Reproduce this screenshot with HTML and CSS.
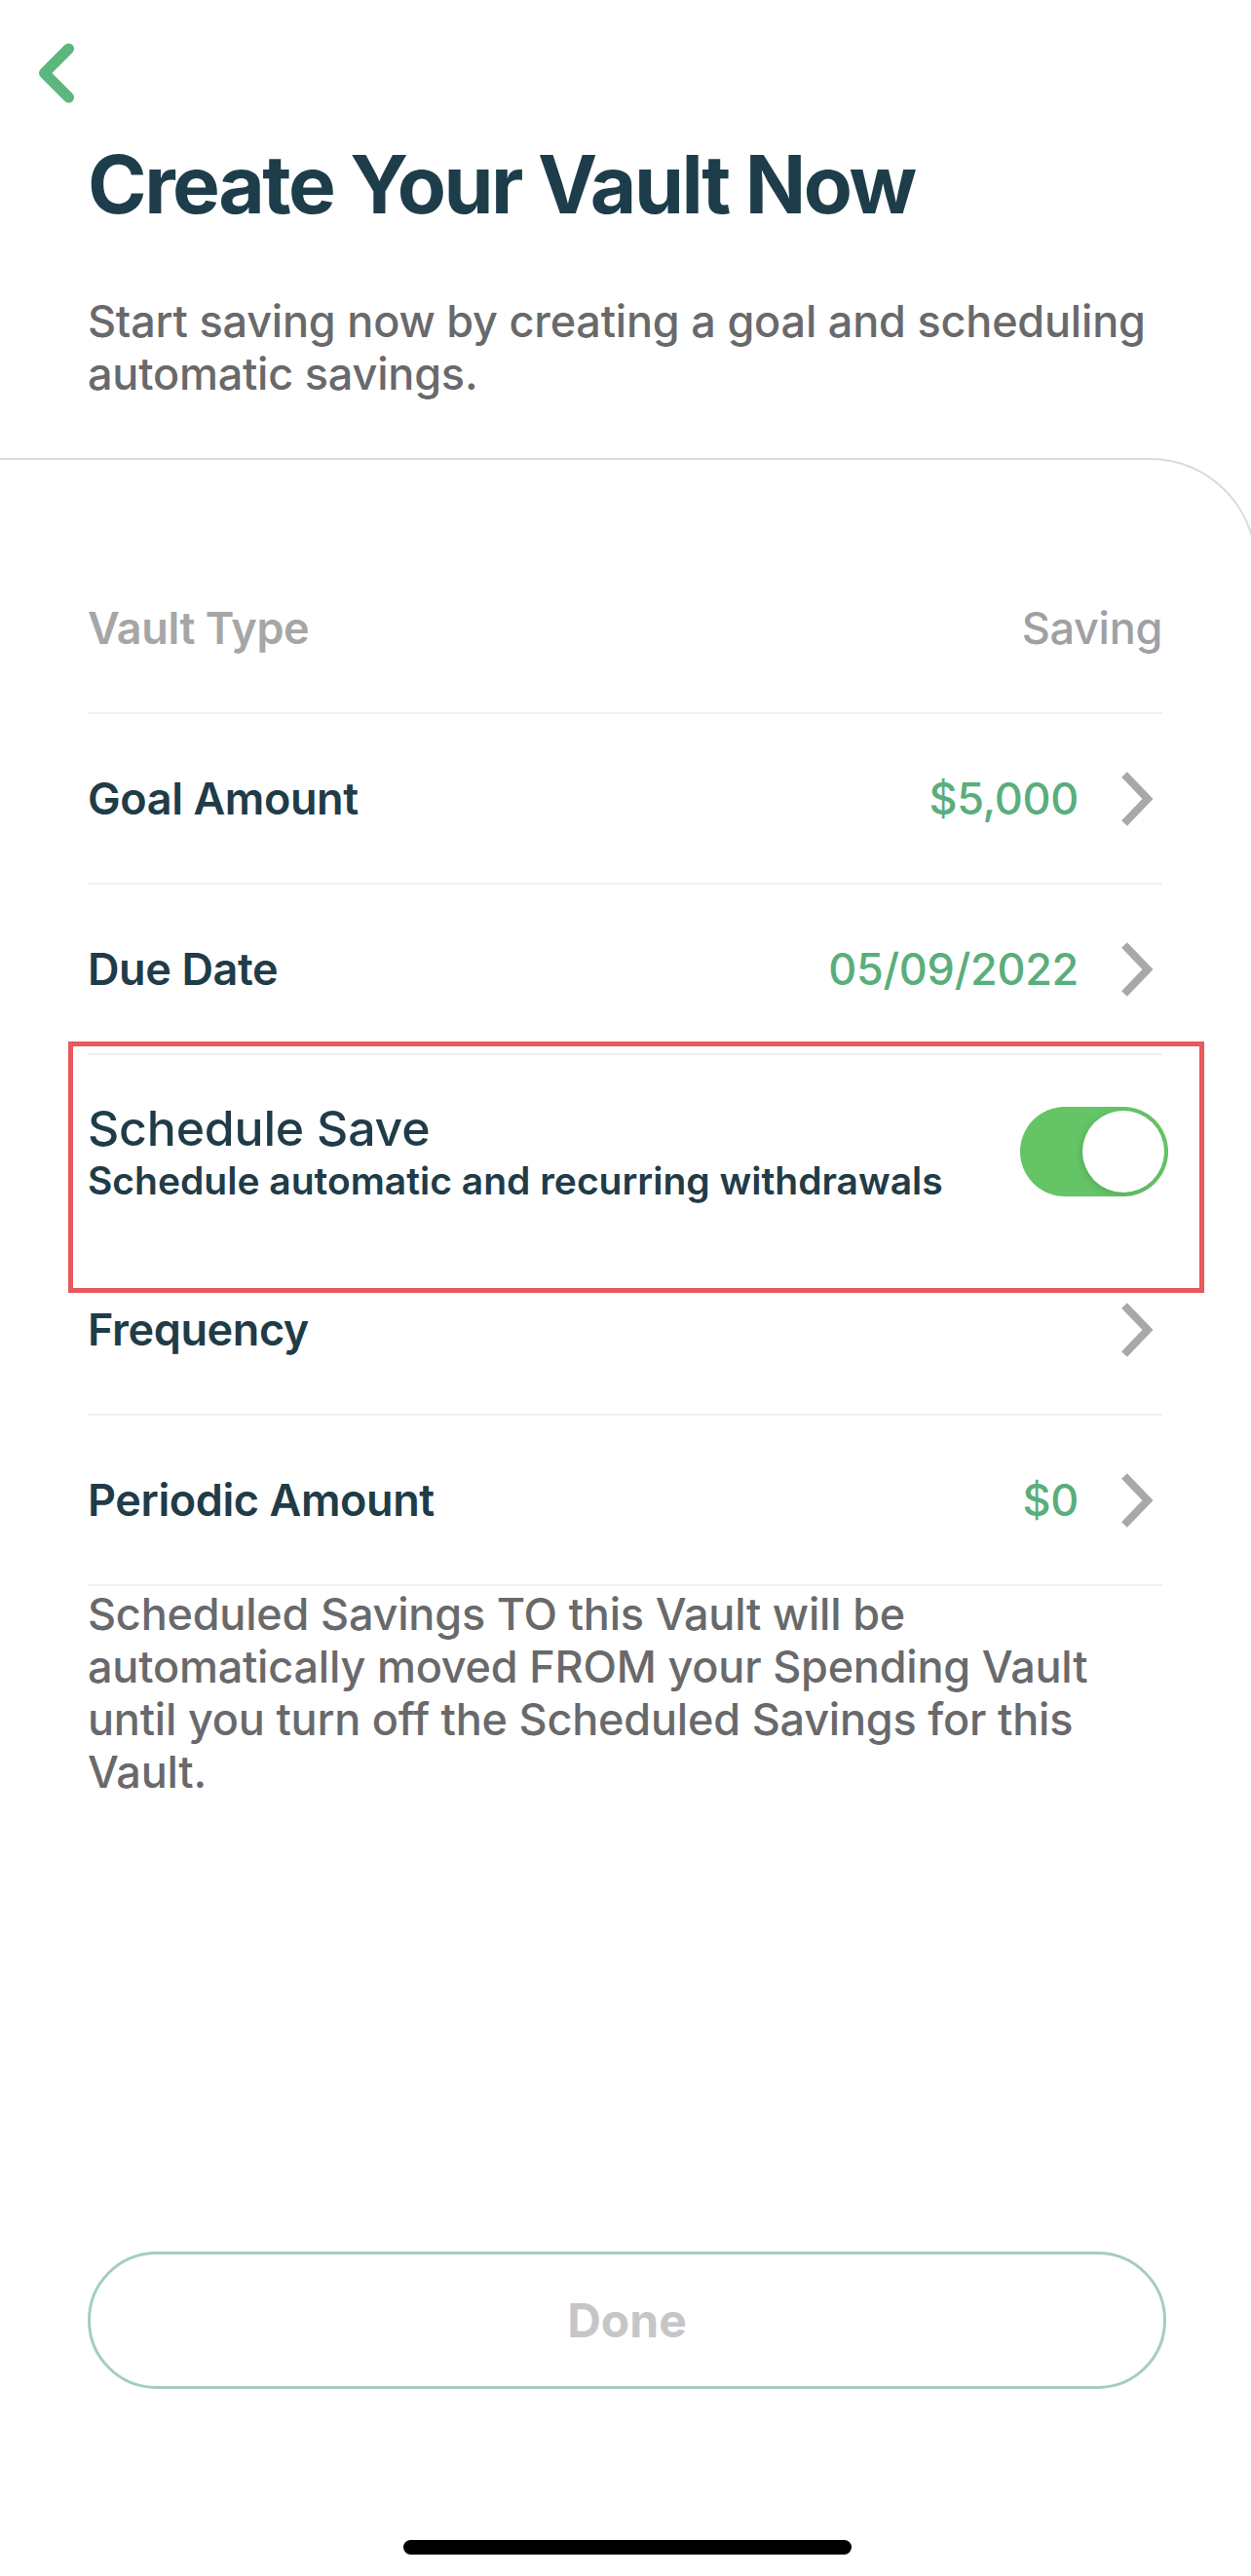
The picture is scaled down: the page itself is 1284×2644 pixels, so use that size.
FILE: index.html
```html
<!DOCTYPE html>
<html lang="en">
<head>
<meta charset="utf-8">
<title>Create Your Vault Now</title>
<link rel="stylesheet" href="styles.css">
</head>
<body>
  <header class="header">
    <svg class="back" viewBox="0 0 44 64" width="44" height="64" aria-label="Back">
      <polyline points="34.5,7 9.5,32 34.5,57" fill="none" stroke="#5bb77e" stroke-width="11" stroke-linecap="round" stroke-linejoin="round"/>
    </svg>
    <h1 class="title">Create Your Vault Now</h1>
    <p class="intro">Start saving now by creating a goal and scheduling automatic savings.</p>
  </header>

  <main class="card">
    <div class="row row-muted">
      <span class="label">Vault Type</span>
      <span class="value value-muted">Saving</span>
    </div>
    <div class="row">
      <span class="label">Goal Amount</span>
      <span class="value">$5,000</span>
      <svg class="chev" viewBox="0 0 34 56" width="34" height="56"><polyline points="4,3 28,28 4,53" fill="none" stroke="#a8a8a8" stroke-width="8"/></svg>
    </div>
    <div class="row">
      <span class="label">Due Date</span>
      <span class="value">05/09/2022</span>
      <svg class="chev" viewBox="0 0 34 56" width="34" height="56"><polyline points="4,3 28,28 4,53" fill="none" stroke="#a8a8a8" stroke-width="8"/></svg>
    </div>
    <div class="schedule">
      <div class="schedule-text">
        <div class="schedule-title">Schedule Save</div>
        <div class="schedule-sub">Schedule automatic and recurring withdrawals</div>
      </div>
      <div class="toggle"><span class="knob"></span></div>
    </div>
    <div class="row">
      <span class="label">Frequency</span>
      <span class="value"></span>
      <svg class="chev" viewBox="0 0 34 56" width="34" height="56"><polyline points="4,3 28,28 4,53" fill="none" stroke="#a8a8a8" stroke-width="8"/></svg>
    </div>
    <div class="row">
      <span class="label">Periodic Amount</span>
      <span class="value">$0</span>
      <svg class="chev" viewBox="0 0 34 56" width="34" height="56"><polyline points="4,3 28,28 4,53" fill="none" stroke="#a8a8a8" stroke-width="8"/></svg>
    </div>
    <p class="note">Scheduled Savings TO this Vault will be automatically moved FROM your Spending Vault until you turn off the Scheduled Savings for this Vault.</p>

    <footer class="footer">
      <button class="done" type="button">Done</button>
      <div class="home-indicator"></div>
    </footer>
  </main>

  <div class="highlight" aria-hidden="true"></div>
</body>
</html>
```

FILE: styles.css
```css
* { box-sizing: border-box; }

html, body {
  margin: 0;
  padding: 0;
}

body {
  width: 1284px;
  height: 2644px;
  overflow: hidden;
  position: relative;
  background: #ffffff;
  font-family: "Inter", "Noto Sans", "Liberation Sans", sans-serif;
  display: flex;
  flex-direction: column;
}

.header {
  display: flex;
  flex-direction: column;
  padding: 43px 0 0 36px;
}

.back {
  display: block;
}

.title {
  margin: 33px 0 0 54px;
  font-size: 82px;
  line-height: 100px;
  font-weight: 700;
  color: #1e3d4a;
  letter-spacing: -2.5px;
}

.intro {
  margin: 63px 0 0 54px;
  width: 1110px;
  font-size: 45px;
  line-height: 54px;
  font-weight: 500;
  color: #69696b;
  letter-spacing: -0.2px;
}

.card {
  flex: 1;
  display: flex;
  flex-direction: column;
  width: 1290px;
  margin-top: 59px;
  padding: 86px 95px 0 90px;
  border-top: 2px solid #d8dce0;
  border-right: 2px solid #d8dce0;
  border-top-right-radius: 110px;
}

.row {
  display: flex;
  align-items: center;
  height: 175px;
  border-bottom: 2px solid #eff0f2;
}

.label {
  flex: 1;
  font-size: 45px;
  font-weight: 600;
  color: #1f3c48;
  letter-spacing: -0.4px;
}

.row-muted .label {
  color: #a6a6a6;
}

.value {
  font-size: 45px;
  font-weight: 500;
  color: #5aae7b;
  letter-spacing: -0.3px;
}

.value-muted {
  color: #a0a0a4;
}

.chev {
  display: block;
  margin-left: 43px;
  margin-right: 9px;
}

.schedule {
  display: flex;
  align-items: center;
  padding: 45px 0 43px;
}

.schedule-text {
  flex: 1;
  display: flex;
  flex-direction: column;
}

.schedule-title {
  font-size: 50px;
  line-height: 60px;
  font-weight: 500;
  color: #1f3c48;
  letter-spacing: -0.2px;
}

.schedule-sub {
  font-size: 39px;
  line-height: 47px;
  font-weight: 600;
  color: #1f3c48;
}

.toggle {
  position: relative;
  width: 152px;
  height: 92px;
  margin-right: -6px;
  border-radius: 46px;
  background: #65c466;
}

.knob {
  position: absolute;
  top: 4px;
  right: 4px;
  width: 84px;
  height: 84px;
  border-radius: 50%;
  background: #ffffff;
  box-shadow: -2px 2px 6px rgba(0, 0, 0, 0.12);
}

.note {
  margin: 2px 0 0;
  font-size: 45px;
  line-height: 54px;
  font-weight: 500;
  color: #69696b;
  letter-spacing: -0.2px;
}

.footer {
  margin-top: auto;
  display: flex;
  flex-direction: column;
  align-items: center;
  padding-bottom: 22px;
}

.done {
  width: 1107px;
  height: 141px;
  border: 3px solid #a3cfb9;
  border-radius: 71px;
  background: #ffffff;
  font-family: "Inter", "Noto Sans", "Liberation Sans", sans-serif;
  font-size: 48px;
  font-weight: 700;
  color: #c6c6c8;
  align-self: flex-start;
  margin-bottom: 155px;
}

.home-indicator {
  width: 460px;
  height: 15px;
  border-radius: 8px;
  background: #000000;
  margin-left: 4px;
}

.highlight {
  position: absolute;
  left: 70px;
  top: 1069px;
  width: 1166px;
  height: 258px;
  border: 5px solid #e8585d;
}
```
